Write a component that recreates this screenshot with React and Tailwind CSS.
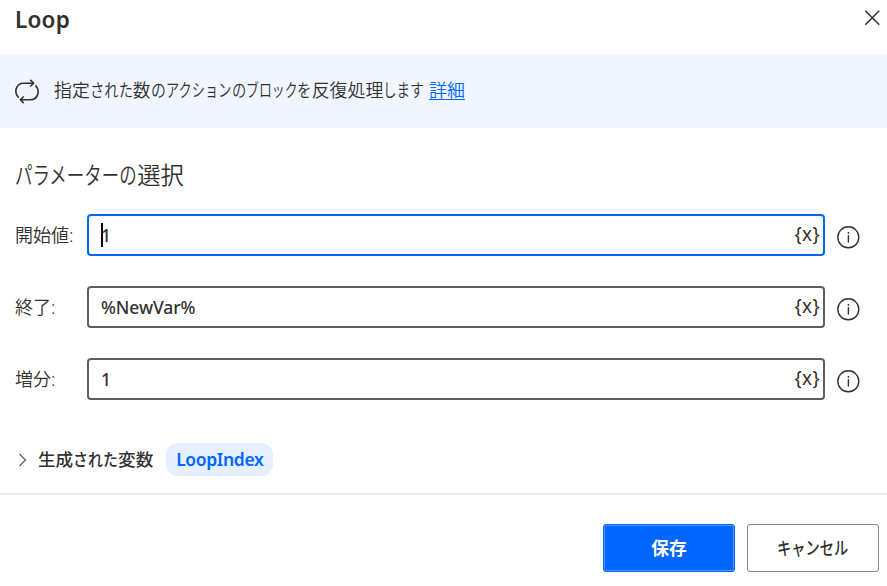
import { clsx } from 'clsx';

// Kana set narrower than the kanji around it; width is in em for the whole run
function Kana({ children, width }) {
  return (
    <span className="inline-block whitespace-nowrap" style={{ width: `${width}em` }}>
      <span
        className="inline-block origin-left"
        style={{ transform: `scaleX(${width / children.length})` }}
      >
        {children}
      </span>
    </span>
  );
}

function LoopIcon() {
  return (
    <svg className="w-[26px] h-[26px] mt-[2px] shrink-0" viewBox="0 0 26 26" fill="none" stroke="#323130" strokeWidth="1.6">
      <path d="M4.6 18.6C-.8 13.2 2.4 4.2 9.5 4.2H19.5" />
      <path d="M16.3 .9 19.6 4.2 16.3 7.5" />
      <path d="M21.4 6.4C26.8 11.8 23.6 20.8 16.5 20.8H6.5" />
      <path d="M9.7 17.5 6.4 20.8 9.7 24.1" />
    </svg>
  );
}

function InfoIcon() {
  return (
    <svg className="w-[24px] h-[24px] shrink-0" viewBox="0 0 24 24" fill="none" stroke="#323130" strokeWidth="1.4">
      <circle cx="12.3" cy="12.3" r="10.5" />
      <path d="M12.4 10.2v7.3M12.4 7v1.7" />
    </svg>
  );
}

function Field({ label, value, focused }) {
  return (
    <div className="flex items-center h-[42px]">
      <div className="w-[72px] font-[350] text-[18px] whitespace-nowrap">{label}</div>
      <div
        className={clsx(
          'flex items-center justify-between w-[738px] h-[42px] border-2 rounded-[4px] bg-white pl-[12px] pr-[3px]',
          focused ? 'border-[#0066ff]' : 'border-[#605e5c]'
        )}
      >
        <div className="relative font-medium text-[17.5px] tracking-[-0.1px] leading-[24px]">
          {focused && <span className="absolute left-0 top-0 w-[2px] h-[24px] bg-black" />}
          {value}
        </div>
        <button className="-mt-[3px] text-[19px] leading-[24px] tracking-[0.3px] font-normal">{'{x}'}</button>
      </div>
      <div className="ml-[11px] mt-[4px]">
        <InfoIcon />
      </div>
    </div>
  );
}

export default function App() {
  return (
    <div className="w-[887px] h-[586px] overflow-hidden bg-white text-[#323130] font-['Noto_Sans','Noto_Sans_CJK_JP',sans-serif]">
      <header className="flex justify-between h-[54px] pl-[15px] pr-[7px]">
        <h1 className="text-[22.5px] leading-[32px] tracking-[0.2px] font-semibold mt-[4px]">Loop</h1>
        <svg className="w-[16px] h-[16px] mt-[10px]" viewBox="0 0 16 16" stroke="#323130" strokeWidth="1.5">
          <path d="M1.3 .7 15.3 14.7M15.3 .7 1.3 14.7" />
        </svg>
      </header>

      {/* Action description */}
      <section className="flex items-center h-[74px] bg-[#f0f5ff] pl-[14px]">
        <LoopIcon />
        <p className="ml-[14px] -mt-[2px] text-[17.9px] leading-[26px] font-[350] whitespace-nowrap">
          指定<Kana width={2.4}>された</Kana>数<Kana width={0.83}>の</Kana>
          <Kana width={3.69}>アクション</Kana><Kana width={0.8}>の</Kana>
          <Kana width={2.88}>ブロック</Kana><Kana width={0.8}>を</Kana>
          反復処理<Kana width={2.28}>します</Kana>
          <a className="ml-[5px] text-[#0066ff] underline underline-offset-[2px]" href="#">詳細</a>
        </p>
      </section>

      {/* Parameters */}
      <main className="pl-[15px] h-[367px] border-b-2 border-[#edebe9]">
        <h2 className="pt-[30px] text-[23.4px] leading-[34px] font-[350] whitespace-nowrap">
          <Kana width={5.22}>パラメーターの</Kana>選択
        </h2>
        <div className="flex flex-col gap-[30px] mt-[22px]">
          <Field label="開始値:" value="1" focused />
          <Field label="終了:" value="%NewVar%" />
          <Field label="増分:" value="1" />
        </div>
        <div className="flex items-center mt-[43px] h-[33px]">
          <svg className="w-[10px] h-[14px] ml-[3px]" viewBox="0 0 10 14" fill="none" stroke="#605e5c" strokeWidth="1.2">
            <path d="M1.5 1 7.5 7 1.5 13" />
          </svg>
          <div className="ml-[10px] text-[17.6px] font-medium whitespace-nowrap">
            生成<Kana width={2.55}>された</Kana>変数
          </div>
          <div className="ml-[13px] w-[107px] h-[33px] text-center rounded-[12px] bg-[#e5efff] text-[#0066ff] text-[17.5px] tracking-[-0.35px] leading-[33px] font-semibold">
            LoopIndex
          </div>
        </div>
      </main>

      <footer className="flex justify-end gap-[12px] pt-[29px] pr-[8px]">
        <button className="w-[132px] h-[48px] rounded-[3px] border border-[#0066ff] bg-[#0066ff] p-0 text-[17.8px] font-bold text-white">
          <span className="flex items-center justify-center w-full h-full rounded-[2px] border border-[#4d94ff]">保存</span>
        </button>
        <button className="w-[132px] h-[48px] rounded-[3px] border border-[#8a8886] bg-white text-[18px] font-medium">
          <Kana width={3.95}>キャンセル</Kana>
        </button>
      </footer>
    </div>
  );
}
